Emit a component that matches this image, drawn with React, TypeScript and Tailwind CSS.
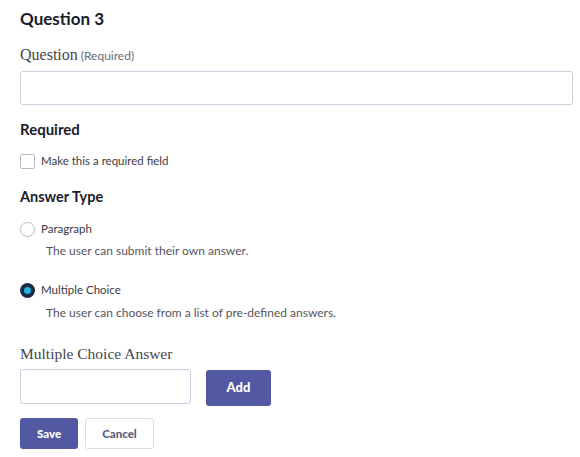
export default function App() {
  const sans = { fontFamily: "Lato, 'Open Sans', sans-serif" };
  const serif = { fontFamily: "'Liberation Serif', serif" };
  return (
    <div className="w-[580px] h-[457px] bg-white px-5 pt-[7px] text-[#2b2b33]" style={sans}>
      <h2 className="text-[17px] font-bold leading-[24px] text-[#1b1b2a]">Question 3</h2>
      <div className="mt-[14px] leading-[20px] flex items-baseline gap-[3px]">
        <span className="text-[16px] text-[#45454d]" style={serif}>Question</span>
        <span className="text-[12px] text-[#6b6b73]">(Required)</span>
      </div>
      <input className="mt-[5px] block h-[34px] w-[553px] rounded-[3px] border border-[#cdcde0] bg-white outline-none" />
      <div className="mt-[14px] text-[15px] font-bold leading-[20px] text-[#1b1b2a]">Required</div>
      <label className="mt-[14px] flex h-4 items-center gap-[6px]">
        <span className="block h-[15px] w-[15px] rounded-[2px] border border-[#b9b9c9] bg-white" />
        <span className="text-[11.5px] text-[#3a3a44]">Make this a required field</span>
      </label>
      <div className="mt-[18px] text-[14.5px] font-bold leading-[20px] text-[#1b1b2a]">Answer Type</div>
      <div className="mt-[14px] flex h-4 items-center gap-[6px]">
        <span className="block h-[15px] w-[15px] rounded-full border border-[#bdbdc6] bg-white" />
        <span className="text-[11.5px] text-[#3a3a44]">Paragraph</span>
      </div>
      <div className="mt-[6px] pl-[26px] text-[12px] leading-4 text-[#55555e]">The user can submit their own answer.</div>
      <div className="mt-[23px] flex h-4 items-center gap-[6px]">
        <span className="flex h-[15px] w-[15px] items-center justify-center rounded-full bg-[#1c2b47]">
          <span className="block h-[7px] w-[7px] rounded-full bg-[#22b5e3]" />
        </span>
        <span className="text-[11.5px] text-[#3a3a44]">Multiple Choice</span>
      </div>
      <div className="mt-[7px] pl-[26px] text-[12px] leading-4 text-[#55555e]">The user can choose from a list of pre-defined answers.</div>
      <div className="mt-[23px] text-[15.5px] leading-[20px] text-[#45454d]" style={serif}>Multiple Choice Answer</div>
      <div className="mt-[5px] flex items-start gap-[15px]">
        <input className="block h-[35px] w-[171px] rounded-[3px] border border-[#cdcde0] bg-white outline-none" />
        <button className="mt-px h-[36px] w-[65px] rounded-[3px] bg-[#5358a2] text-[13px] font-black text-white">Add</button>
      </div>
      <div className="mt-[12px] flex gap-[7px]">
        <button className="h-[31px] w-[58px] rounded-[3px] bg-[#5358a2] text-[11.5px] font-black text-white">Save</button>
        <button className="h-[31px] w-[69px] rounded-[3px] border border-[#dcdce4] bg-white text-[11.5px] font-black text-[#5a5d7e]">Cancel</button>
      </div>
    </div>
  );
}
